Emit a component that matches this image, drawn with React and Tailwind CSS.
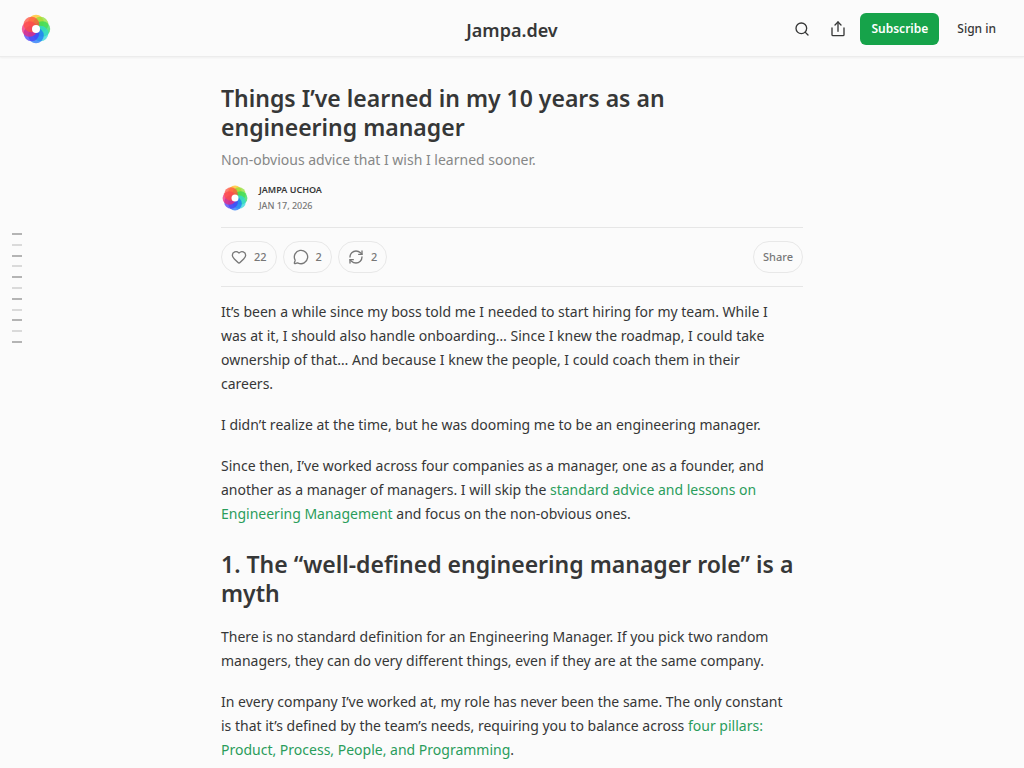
import React from 'react';
import { Heart, MessageCircle, RefreshCw, Search } from 'lucide-react';

const petals = [
  { color: '#ffc21f', angle: 0 },
  { color: '#8fe035', angle: 45 },
  { color: '#2fdc5a', angle: 90 },
  { color: '#2fd8d8', angle: 135 },
  { color: '#1f74f8', angle: 180 },
  { color: '#4a3df5', angle: 225 },
  { color: '#f02a78', angle: 270 },
  { color: '#ff5040', angle: 315 },
];

// strong marks are top level sections, light ones are their subsections
const outline = [true, false, true, false, true, false, true, false, true, false, true];

const Logo = ({ className }) => (
  <svg viewBox="0 0 32 32" className={className} aria-hidden="true">
    {petals.map((petal) => (
      <circle
        key={petal.angle}
        cx="16"
        cy="9.6"
        r="7.8"
        fill={petal.color}
        fillOpacity="0.75"
        transform={`rotate(${petal.angle} 16 16)`}
      />
    ))}
    <circle cx="16" cy="16" r="4" fill="#fff" />
  </svg>
);

const ShareIcon = ({ className }) => (
  <svg
    viewBox="0 0 24 24"
    className={className}
    fill="none"
    stroke="currentColor"
    strokeWidth="2"
    strokeLinecap="round"
    strokeLinejoin="round"
    aria-hidden="true"
  >
    <path d="M3 10.500v10a1.500 1.500 0 0 0 1.500 1.500h15a1.500 1.500 0 0 0 1.500-1.500v-10" />
    <path d="M12 15.500V1.500" />
    <path d="m7.500 6 4.500-4.500L16.500 6" />
  </svg>
);

const Header = () => (
  <header className="grid h-[57px] grid-cols-[1fr_auto_1fr] items-center border-b border-[#ececec] px-5 pt-px shadow-xs">
    <a href="#home" aria-label="Jampa.dev home" className="justify-self-start">
      <Logo className="size-8" />
    </a>
    <a href="#home" className="pt-[2px] text-[18px] leading-6 font-semibold text-[#363737]">
      Jampa.dev
    </a>
    <div className="flex items-center justify-self-end">
      <button type="button" aria-label="Search" className="flex w-9 justify-center">
        <Search className="size-4" />
      </button>
      <button type="button" aria-label="Share" className="flex w-9 justify-center">
        <ShareIcon className="size-4" />
      </button>
      <button type="button" className="ml-1 h-8 rounded-md bg-[#16a34a] px-[11px] text-[12px] font-semibold text-white">
        Subscribe
      </button>
      <button type="button" className="ml-[10px] h-8 px-2 text-[12px] font-medium">
        Sign in
      </button>
    </div>
  </header>
);

const Outline = () => (
  <nav
    aria-label="Table of contents"
    className="fixed top-[233px] left-3 flex h-[110px] flex-col justify-between"
  >
    {outline.map((strong, index) => (
      <span key={index} className={strong ? 'h-[2px] w-[10px] bg-[#b4b4b4]' : 'h-[2px] w-[10px] bg-[#dadada]'} />
    ))}
  </nav>
);

const Pill = ({ label, count, children }) => (
  <button
    type="button"
    aria-label={label}
    className="flex h-8 items-center gap-[7px] rounded-full border border-[#e8e8e8] px-[9px] text-[11px] font-medium"
  >
    {children}
    {count}
  </button>
);

const GreenLink = ({ children }) => (
  <a href="#post" className="text-[#2a9d5b]">
    {children}
  </a>
);

const App = () => {
  return (
    <div className="min-h-screen bg-[#fbfbfb] font-['Noto_Sans',sans-serif] text-[#363737]">
      <Header />
      <Outline />
      <main className="mx-auto max-w-[582px] pt-[27px]">
        <h1 className="text-[23px] leading-[29px] font-semibold">
          Things I’ve learned in my 10 years as an
          <br /> engineering manager
        </h1>
        <p className="mt-2 text-[14px] leading-5 text-[#868787]">Non-obvious advice that I wish I learned sooner.</p>

        <div className="mt-3 flex items-center gap-[10px]">
          <Logo className="size-7" />
          <div className="text-[9px] leading-4 font-medium">
            <div className="font-semibold uppercase">Jampa Uchoa</div>
            <div className="text-[#777] uppercase">Jan 17, 2026</div>
          </div>
        </div>

        <div className="mt-[13px] flex items-center gap-[6px] border-y border-[#e6e6e6] py-[13px] text-[#777]">
          <Pill label="Like" count={22}>
            <Heart className="size-4" />
          </Pill>
          <Pill label="Comments" count={2}>
            <MessageCircle className="size-4" />
          </Pill>
          <Pill label="Restack" count={2}>
            <RefreshCw className="size-4" />
          </Pill>
          <button
            type="button"
            className="ml-auto h-8 rounded-full border border-[#e8e8e8] px-[9px] text-[11px] font-medium"
          >
            Share
          </button>
        </div>

        <article className="mt-[13px] flex flex-col gap-[17px] text-[14px] leading-6">
          <p>
            It’s been a while since my boss told me I needed to start hiring for my team. While I
            <br /> was at it, I should also handle onboarding… Since I knew the roadmap, I could take
            <br /> ownership of that… And because I knew the people, I could coach them in their
            <br /> careers.
          </p>
          <p>I didn’t realize at the time, but he was dooming me to be an engineering manager.</p>
          <p>
            Since then, I’ve worked across four companies as a manager, one as a founder, and another as a manager of
            managers. I will skip the <GreenLink>standard advice and lessons on Engineering Management</GreenLink> and
            focus on the non-obvious ones.
          </p>
          <h2 className="-mr-4 mt-[7px] text-[23px] leading-[29px] font-semibold">
            1. The “well-defined engineering manager role” is a
            <br /> myth
          </h2>
          <p>
            There is no standard definition for an Engineering Manager. If you pick two random managers, they can do
            very different things, even if they are at the same company.
          </p>
          <p>
            In every company I’ve worked at, my role has never been the same. The only constant
            <br /> is that it’s defined by the team’s needs, requiring you to balance across{' '}
            <GreenLink>
              four pillars:
              <br /> Product, Process, People, and Programming
            </GreenLink>
            .
          </p>
        </article>
      </main>
    </div>
  );
};

export default App;
